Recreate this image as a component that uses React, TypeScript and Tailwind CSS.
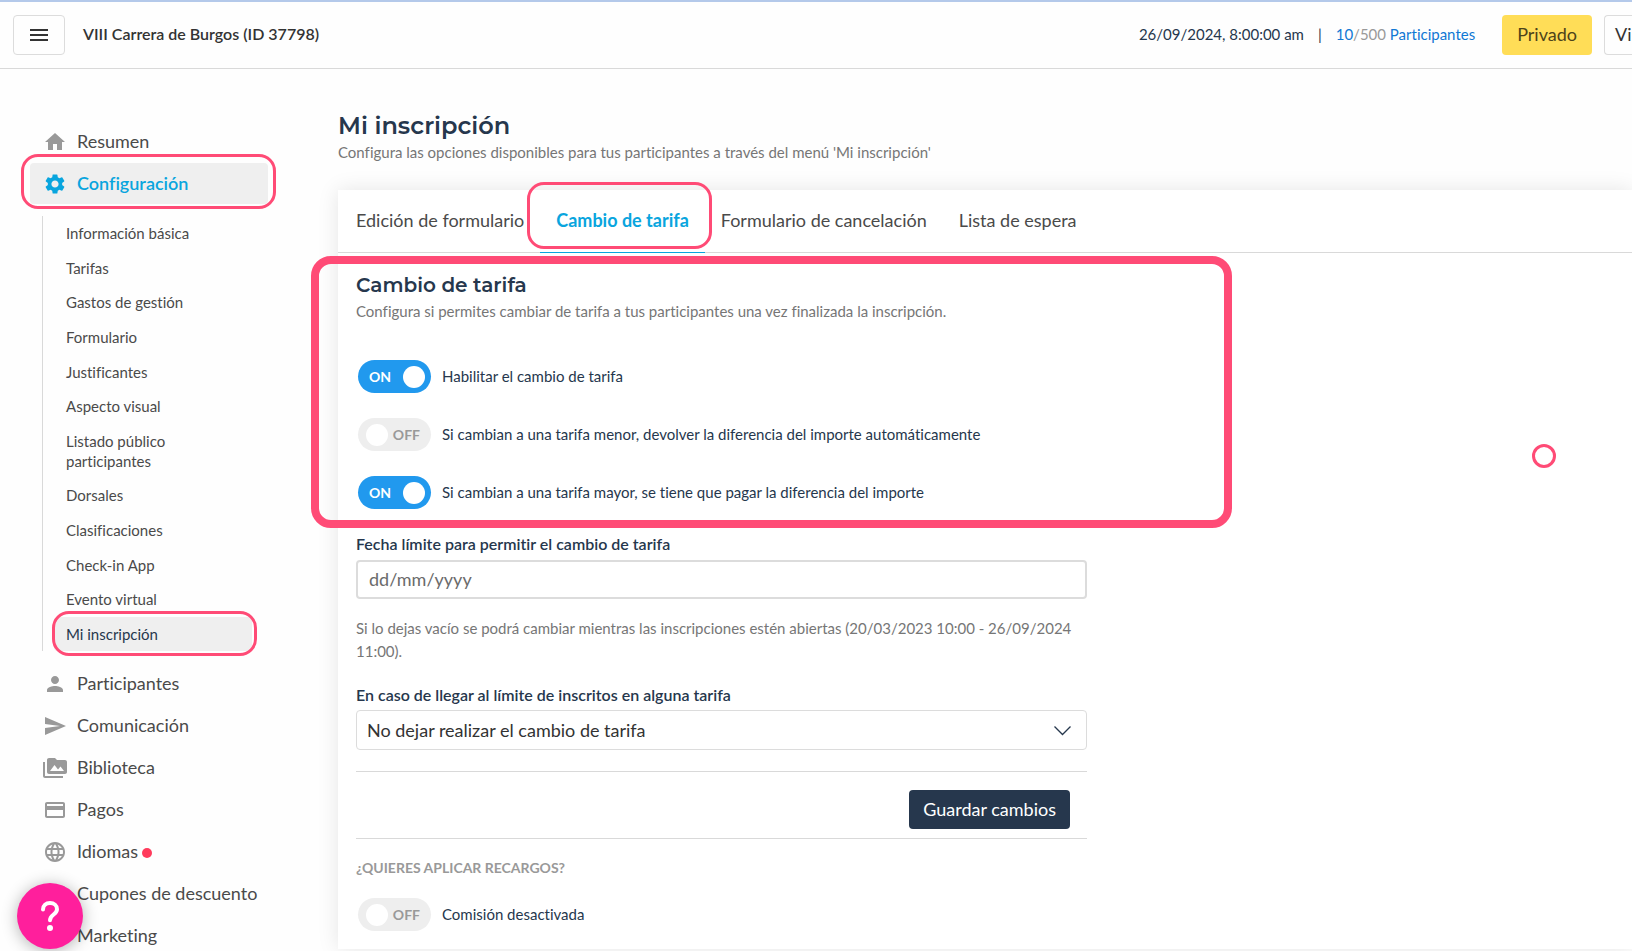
import React, { useState } from "react";
import {
  MdConfirmationNumber,
  MdHome,
  MdLanguage,
  MdMenu,
  MdPayment,
  MdPermMedia,
  MdPerson,
  MdSend,
  MdSettings,
  MdVolumeUp,
} from "react-icons/md";
import type { IconType } from "react-icons";

interface MenuItem {
  label: string;
  icon: IconType;
  hasBadge?: boolean;
}

const CONFIG_ITEMS = [
  "Información básica",
  "Tarifas",
  "Gastos de gestión",
  "Formulario",
  "Justificantes",
  "Aspecto visual",
  "Listado público participantes",
  "Dorsales",
  "Clasificaciones",
  "Check-in App",
  "Evento virtual",
  "Mi inscripción",
];

const MENU_ITEMS: MenuItem[] = [
  { label: "Participantes", icon: MdPerson },
  { label: "Comunicación", icon: MdSend },
  { label: "Biblioteca", icon: MdPermMedia },
  { label: "Pagos", icon: MdPayment },
  { label: "Idiomas", icon: MdLanguage, hasBadge: true },
  { label: "Cupones de descuento", icon: MdConfirmationNumber },
  { label: "Marketing", icon: MdVolumeUp },
];

const TABS = [
  "Edición de formulario",
  "Cambio de tarifa",
  "Formulario de cancelación",
  "Lista de espera",
];

// Pink outline drawn over the element that has to be noticed
const Highlight = ({ className }: { className: string }) => (
  <span
    aria-hidden="true"
    className={`absolute pointer-events-none border-[#ff4b76] z-10 ${className}`}
  />
);

const SideLink = ({ label, icon: Icon, hasBadge }: MenuItem) => (
  <a
    href="#"
    className="flex items-center gap-[10px] h-[41px] pl-[13px] text-lg text-[#4a4a4a]"
  >
    <Icon className="size-6 text-[#999]" />
    <span className="pb-0.5">{label}</span>
    {hasBadge && (
      <span className="size-[10px] -ml-[6px] mt-0.5 rounded-full bg-[#ff3b5c]" />
    )}
  </a>
);

interface ToggleProps {
  label: string;
  defaultOn?: boolean;
}

const Toggle: React.FC<ToggleProps> = ({ label, defaultOn = false }) => {
  const [on, setOn] = useState(defaultOn);

  return (
    <label className="flex items-center pl-[2px] cursor-pointer text-[15px] text-[#26374d]">
      <input
        type="checkbox"
        className="sr-only"
        checked={on}
        onChange={() => setOn(!on)}
      />
      <span
        className={`flex items-center justify-between w-[73px] h-[33px] mr-[11px] rounded-full text-sm font-bold ${
          on
            ? "flex-row pl-[11px] pr-[6px] bg-[#2199ee] text-white"
            : "flex-row-reverse pl-2 pr-[11px] bg-[#eee] text-[#999]"
        }`}
      >
        <span>{on ? "ON" : "OFF"}</span>
        <span className="size-[22px] rounded-full bg-white" />
      </span>
      {label}
    </label>
  );
};

const Header = () => (
  <header className="flex items-center shrink-0 h-[69px] pl-[13px] border-t-2 border-t-[#b4c9ea] border-b border-b-[#d9d9d9] text-[#26374d]">
    <button
      aria-label="Menú"
      className="flex items-center justify-center w-[52px] h-10 rounded border border-[#dcdcdc] text-[#333]"
    >
      <MdMenu className="size-6" />
    </button>
    <h1 className="ml-[18px] pb-0.5 text-base font-semibold text-[#333]">
      VIII Carrera de Burgos (ID 37798)
    </h1>
    <div className="flex items-center ml-auto text-[15px]">
      <span className="pb-0.5">26/09/2024, 8:00:00 am</span>
      <span className="px-[14px] pb-0.5">|</span>
      <a href="#" className="pb-0.5 text-[#1178d4]">
        10<span className="text-[#999]">/500</span> Participantes
      </a>
      <button className="h-10 ml-[27px] px-[15px] pb-0.5 rounded bg-[#ffdd57] text-lg text-[#4d431a]">
        Privado
      </button>
      <button className="w-7 h-10 ml-3 pl-[10px] pb-0.5 text-left rounded-l border border-r-0 border-[#dcdcdc] text-lg text-[#333]">
        Vi
      </button>
    </div>
  </header>
);

const Sidebar = () => (
  <nav className="shrink-0 w-[338px] pl-[30px] pt-[52px]">
    <div className="flex flex-col gap-px w-[238px]">
      <SideLink label="Resumen" icon={MdHome} />
      <a
        href="#"
        className="relative flex items-center gap-[10px] h-[41px] pl-[13px] rounded bg-[#efefef] text-lg font-semibold text-[#09a5de]"
      >
        <MdSettings className="size-6" />
        <span className="pb-0.5">Configuración</span>
        <Highlight className="-top-[9px] -bottom-[5px] -left-[9px] -right-2 border-[3px] rounded-[17px]" />
      </a>
      <ul className="flex flex-col justify-between min-h-[435px] my-[11px] ml-3 pl-[11px] border-l border-[#d9d9d9]">
        {CONFIG_ITEMS.map((item) => {
          const isActive = item === "Mi inscripción";
          return (
            <li key={item} className="relative mr-4">
              <a
                href="#"
                className={`block py-[7px] pl-3 pr-10 text-[15px] leading-5 ${
                  isActive ? "rounded bg-[#efefef] text-[#26374d]" : "text-[#4a4a4a]"
                }`}
              >
                {item}
              </a>
              {isActive && (
                <Highlight className="-top-[6px] -bottom-[5px] -left-[2px] -right-[5px] border-[3px] rounded-[17px]" />
              )}
            </li>
          );
        })}
      </ul>
      {MENU_ITEMS.map((item) => (
        <SideLink key={item.label} {...item} />
      ))}
    </div>
  </nav>
);

const Tabs = () => (
  <div role="tablist" className="flex h-[63px] pl-[2px] border-b border-[#d9d9d9]">
    {TABS.map((tab) => {
      const isActive = tab === "Cambio de tarifa";
      return (
        <button
          key={tab}
          role="tab"
          aria-selected={isActive}
          className={`relative -mb-px px-4 pb-0.5 border-b text-lg ${
            isActive
              ? "border-[#09a5de] font-bold text-[#09a5de]"
              : "border-transparent text-[#4a4a4a]"
          }`}
        >
          {tab}
          {isActive && (
            <Highlight className="-top-2 bottom-[3px] -left-[13px] -right-[7px] border-[3px] rounded-[17px]" />
          )}
        </button>
      );
    })}
  </div>
);

const ChangeRateForm = () => (
  <form className="max-w-[731px]" onSubmit={(e) => e.preventDefault()}>
    <section className="relative pt-5">
      <h3 className="font-[Montserrat,Inter,sans-serif] font-semibold text-xl leading-6 text-[#26374d]">
        Cambio de tarifa
      </h3>
      <p className="mt-[3px] text-[15px] leading-[23px] text-[#767676]">
        Configura si permites cambiar de tarifa a tus participantes una vez
        finalizada la inscripción.
      </p>
      <div className="flex flex-col gap-[25px] mt-[37px]">
        <Toggle label="Habilitar el cambio de tarifa" defaultOn />
        <Toggle label="Si cambian a una tarifa menor, devolver la diferencia del importe automáticamente" />
        <Toggle
          label="Si cambian a una tarifa mayor, se tiene que pagar la diferencia del importe"
          defaultOn
        />
      </div>
      <Highlight className="top-[3px] -bottom-[19px] -left-[45px] -right-[145px] border-8 rounded-[20px]" />
    </section>

    <label
      htmlFor="limit-date"
      className="block mt-[25px] text-base leading-5 font-semibold text-[#26374d]"
    >
      Fecha límite para permitir el cambio de tarifa
    </label>
    <input
      id="limit-date"
      type="text"
      placeholder="dd/mm/yyyy"
      className="block w-full h-[39px] mt-[6px] px-[11px] pb-0.5 rounded border-2 border-[#dcdcdc] text-lg text-[#333] placeholder:text-[#6b6b6b]"
    />
    <p className="mt-[18px] text-[15px] leading-[23px] text-[#767676]">
      Si lo dejas vacío se podrá cambiar mientras las inscripciones estén
      abiertas (20/03/2023 10:00 - 26/09/2024 11:00).
    </p>

    <label
      htmlFor="limit-action"
      className="block mt-[22px] text-base leading-5 font-semibold text-[#26374d]"
    >
      En caso de llegar al límite de inscritos en alguna tarifa
    </label>
    <div className="relative mt-[5px]">
      <select
        id="limit-action"
        className="block w-full h-10 pl-[10px] pr-10 appearance-none rounded border border-[#dcdcdc] bg-white text-lg text-[#333]"
      >
        <option>No dejar realizar el cambio de tarifa</option>
      </select>
      <svg
        className="absolute right-4 top-4 w-[17px] h-[10px] pointer-events-none"
        viewBox="0 0 17 10"
        fill="none"
        stroke="#26374d"
        strokeWidth={1.3}
      >
        <path d="M0.5 0.5L8.5 8.5L16.5 0.5" />
      </svg>
    </div>

    <div className="flex justify-end mt-[21px] pt-[18px] pb-[9px] pr-[17px] border-y border-[#d9d9d9]">
      <button
        type="submit"
        className="h-[39px] px-[14px] pb-0.5 rounded bg-[#26374d] text-lg text-white"
      >
        Guardar cambios
      </button>
    </div>

    <h4 className="mt-[19px] mb-5 text-sm leading-5 font-bold uppercase text-[#999]">
      ¿Quieres aplicar recargos?
    </h4>
    <Toggle label="Comisión desactivada" />
  </form>
);

const App: React.FC = () => {
  return (
    <div className="flex flex-col h-screen overflow-hidden bg-[#fefefe] font-[Lato,sans-serif] [font-variant-ligatures:no-common-ligatures]">
      <Header />
      <div className="flex flex-1 items-start">
        <Sidebar />
        <main className="relative flex-1 min-w-0 pt-[42px]">
          <h2 className="font-[Montserrat,Inter,sans-serif] font-semibold text-2xl leading-[30px] text-[#26374d]">
            Mi inscripción
          </h2>
          <p className="text-[15px] leading-[23px] text-[#767676]">
            Configura las opciones disponibles para tus participantes a través
            del menú 'Mi inscripción'
          </p>
          <div className="mt-[26px] bg-white shadow-[0_0_20px_rgba(0,0,0,0.1)]">
            <Tabs />
            <div className="px-[18px] pb-[18px]">
              <ChangeRateForm />
            </div>
          </div>
          {/* Click marker */}
          <Highlight className="top-[375px] right-[76px] size-6 border-[3px] rounded-full" />
        </main>
      </div>

      <button
        aria-label="Ayuda"
        className="fixed bottom-[2px] left-[17px] z-20 flex items-center justify-center size-[66px] rounded-full bg-[#ff1f9c] shadow-[0_2px_16px_rgba(0,0,0,0.3)]"
      >
        <svg
          className="w-5 h-8"
          viewBox="0 0 20 32"
          fill="none"
          stroke="white"
          strokeWidth={4}
          strokeLinecap="round"
        >
          <path d="M3 9.5C3 5.5 6 3 10 3s7 2.600 7 6.200c0 5.300-7 5.300-7 11" />
          <circle cx="10" cy="28" r="3" fill="white" stroke="none" />
        </svg>
      </button>
    </div>
  );
};

export default App;
